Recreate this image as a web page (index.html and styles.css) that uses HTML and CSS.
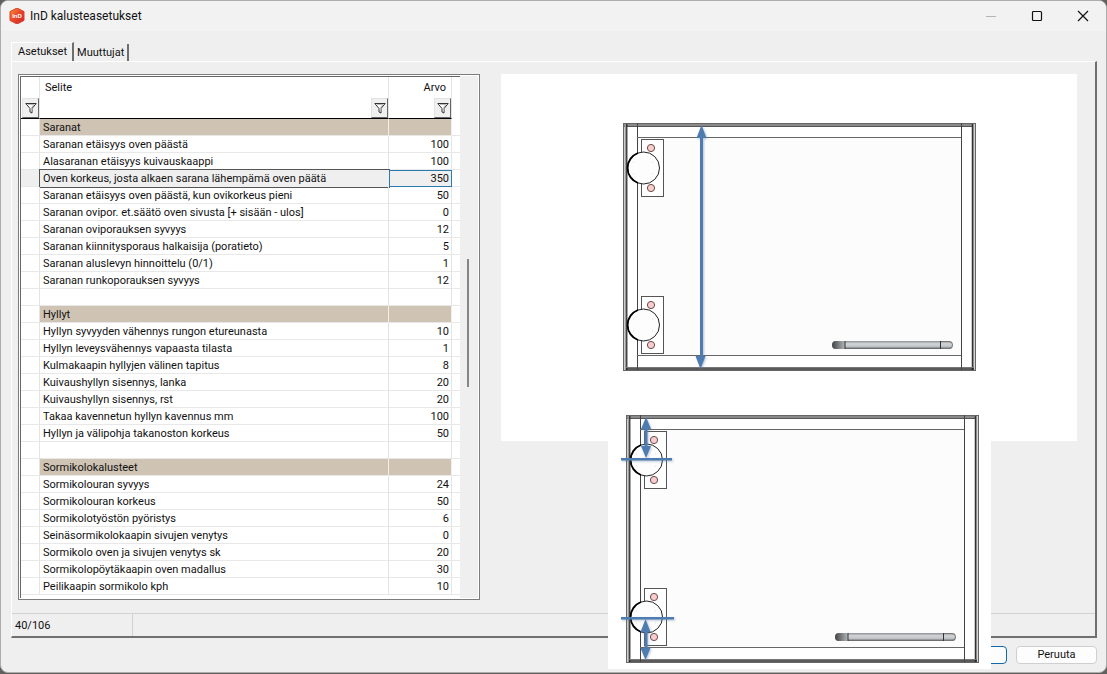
FILE: index.html
```
<!DOCTYPE html>
<html lang="fi">
<head>
<meta charset="utf-8">
<title>InD kalusteasetukset</title>
<link rel="stylesheet" href="styles.css">
</head>
<body>
<svg class="defs" width="0" height="0" aria-hidden="true">
  <defs>
    <linearGradient id="logo-fill" x1="0" y1="0" x2="1" y2="1"><stop offset="0" stop-color="#f59a2c"/><stop offset=".45" stop-color="#ea4b2a"/><stop offset="1" stop-color="#cf1f2b"/></linearGradient>
    <linearGradient id="bar-fill" x1="0" y1="0" x2="0" y2="1"><stop offset="0" stop-color="#8d9092"/><stop offset=".35" stop-color="#d3d6d8"/><stop offset=".7" stop-color="#bfc2c4"/><stop offset="1" stop-color="#55585a"/></linearGradient>
    <linearGradient id="bar-end" x1="0" y1="0" x2="1" y2="0"><stop offset="0" stop-color="#444"/><stop offset="1" stop-color="#b4b7b9"/></linearGradient>
    <filter id="soft" x="-200%" y="-20%" width="500%" height="140%"><feDropShadow dx="1" dy="1" stdDeviation="1" flood-color="#5f7ba5" flood-opacity=".45"/></filter>
    <filter id="soft-line" filterUnits="userSpaceOnUse" x="0" y="0" width="383" height="260"><feDropShadow dx="1" dy="1" stdDeviation="1" flood-color="#5f7ba5" flood-opacity=".45"/></filter>
    <symbol id="funnel" viewBox="0 0 12 12"><path d="M.8 1.500h10.400L7 6.500V11L5 10V6.500z" fill="#fff" stroke="#333"/><path d="M3 2.500h6L6.500 5.500V9.500" fill="none" stroke="#bbb"/></symbol>
    <g id="hinge">
      <rect x="19.500" y="17.500" width="22" height="57" fill="#fff" stroke="#555"/>
      <circle cx="21.500" cy="46" r="16" fill="#fdfdfd" stroke="#222"/>
      <path d="M16 31a16 16 0 0 0 0 30" fill="none" stroke="#000" stroke-width="1.800"/>
      <circle cx="29" cy="26" r="3.600" fill="#f8cdcd" stroke="#6d4a4a"/>
      <circle cx="29" cy="66" r="3.600" fill="#f8cdcd" stroke="#6d4a4a"/>
      <path d="M11 40h1m18 0h1m-20 12h1m18 0h1" stroke="#ddd"/>
    </g>
    <g id="door">
      <rect x="1.500" y="1.500" width="352" height="247" fill="#fff" stroke="#666"/>
      <rect x="15" y="15" width="324" height="218" fill="#fcfcfc"/>
      <rect x="2" y="2" width="349" height="2.500" fill="#8a8a8a"/>
      <path d="M2 4.500h350" stroke="#555"/>
      <path d="M3.500 2v246" stroke="#999" stroke-width="2"/>
      <path d="M4.800 2v246" stroke="#222" stroke-width="1.200"/>
      <path d="M351.500 2v246" stroke="#aaa" stroke-width="2"/>
      <path d="M350.500 2v246" stroke="#333" stroke-width="1.500"/>
      <path d="M4 245.500h348" stroke="#777"/>
      <path d="M4 247h348" stroke="#222" stroke-width="1.500"/>
      <path d="M15.500 1v247M339.500 1v247" stroke="#444"/>
      <path d="M15 15.500h324M15 233.500h324" stroke="#666"/>
      <use href="#hinge"/>
      <use href="#hinge" y="157"/>
      <rect x="210" y="219" width="121" height="8" rx="4" fill="url(#bar-fill)"/>
      <path d="M223 219h-9a4 4 0 0 0 0 8h9z" fill="url(#bar-end)"/>
      <path d="M319 219.500h8a3.500 3.500 0 0 1 0 7h-8" fill="none" stroke="#777"/>
      <path d="M223 219v8M318.500 219v8" stroke="#333"/>
    </g>
  </defs>
</svg>

<div class="window">
  <header class="titlebar">
    <svg class="logo" viewBox="0 0 16 16" aria-hidden="true"><path d="M8 0l7 3.600v8.800L8 16l-7-3.600V3.600z" fill="url(#logo-fill)" stroke="#d9402a" stroke-linejoin="round"/><text x="8" y="10" text-anchor="middle" class="logo-text">InD</text></svg>
    <h1 class="title">InD kalusteasetukset</h1>
    <button class="caption-button" aria-label="Pienennä" disabled><svg viewBox="0 0 12 12"><path d="M1 6.500h10" stroke="#b5b5b5"/></svg></button>
    <button class="caption-button" aria-label="Suurenna"><svg viewBox="0 0 12 12"><rect x="1.500" y="1.500" width="9" height="9" rx="1" fill="none" stroke="#111" stroke-width="1.200"/></svg></button>
    <button class="caption-button" aria-label="Sulje"><svg viewBox="0 0 12 12"><path d="M1 1l10 10M11 1L1 11" stroke="#111" stroke-width="1.200"/></svg></button>
  </header>

  <main class="content">
    <div class="tabs" role="tablist">
      <button class="tab tab-active" role="tab" aria-selected="true">Asetukset</button>
      <button class="tab" role="tab" aria-selected="false">Muuttujat</button>
    </div>
    <section class="panel">
      <div class="workspace">
        <div class="grid-frame">
          <div class="grid-body">
            <table class="grid">
              <colgroup><col class="col-mark"><col><col class="col-value"><col class="col-rest"></colgroup>
              <thead>
                <tr class="labels"><th></th><th>Selite</th><th class="value">Arvo</th><td></td></tr>
                <tr class="filters">
                  <td><button class="filter" aria-label="Suodata"><svg><use href="#funnel"/></svg></button></td>
                  <td><button class="filter" aria-label="Suodata selite"><svg><use href="#funnel"/></svg></button></td>
                  <td><button class="filter" aria-label="Suodata arvo"><svg><use href="#funnel"/></svg></button></td>
                  <td class="plain"></td>
                </tr>
              </thead>
              <tbody>
                <tr class="group"><td></td><td>Saranat</td><td></td><td></td></tr>
                <tr><td></td><td>Saranan etäisyys oven päästä</td><td>100</td><td></td></tr>
                <tr><td></td><td>Alasaranan etäisyys kuivauskaappi</td><td>100</td><td></td></tr>
                <tr class="selected"><td></td><td>Oven korkeus, josta alkaen sarana lähempämä oven päätä</td><td>350</td><td></td></tr>
                <tr><td></td><td>Saranan etäisyys oven päästä, kun ovikorkeus pieni</td><td>50</td><td></td></tr>
                <tr><td></td><td>Saranan ovipor. et.säätö oven sivusta [+ sisään - ulos]</td><td>0</td><td></td></tr>
                <tr><td></td><td>Saranan oviporauksen syvyys</td><td>12</td><td></td></tr>
                <tr><td></td><td>Saranan kiinnitysporaus halkaisija (poratieto)</td><td>5</td><td></td></tr>
                <tr><td></td><td>Saranan aluslevyn hinnoittelu (0/1)</td><td>1</td><td></td></tr>
                <tr><td></td><td>Saranan runkoporauksen syvyys</td><td>12</td><td></td></tr>
                <tr><td></td><td></td><td></td><td></td></tr>
                <tr class="group"><td></td><td>Hyllyt</td><td></td><td></td></tr>
                <tr><td></td><td>Hyllyn syvyyden vähennys rungon etureunasta</td><td>10</td><td></td></tr>
                <tr><td></td><td>Hyllyn leveysvähennys vapaasta tilasta</td><td>1</td><td></td></tr>
                <tr><td></td><td>Kulmakaapin hyllyjen välinen tapitus</td><td>8</td><td></td></tr>
                <tr><td></td><td>Kuivaushyllyn sisennys, lanka</td><td>20</td><td></td></tr>
                <tr><td></td><td>Kuivaushyllyn sisennys, rst</td><td>20</td><td></td></tr>
                <tr><td></td><td>Takaa kavennetun hyllyn kavennus mm</td><td>100</td><td></td></tr>
                <tr><td></td><td>Hyllyn ja välipohja takanoston korkeus</td><td>50</td><td></td></tr>
                <tr><td></td><td></td><td></td><td></td></tr>
                <tr class="group"><td></td><td>Sormikolokalusteet</td><td></td><td></td></tr>
                <tr><td></td><td>Sormikolouran syvyys</td><td>24</td><td></td></tr>
                <tr><td></td><td>Sormikolouran korkeus</td><td>50</td><td></td></tr>
                <tr><td></td><td>Sormikolotyöstön pyöristys</td><td>6</td><td></td></tr>
                <tr><td></td><td>Seinäsormikolokaapin sivujen venytys</td><td>0</td><td></td></tr>
                <tr><td></td><td>Sormikolo oven ja sivujen venytys sk</td><td>20</td><td></td></tr>
                <tr><td></td><td>Sormikolopöytäkaapin oven madallus</td><td>30</td><td></td></tr>
                <tr><td></td><td>Peilikaapin sormikolo kph</td><td>10</td><td></td></tr>
              </tbody>
            </table>
          </div>
          <div class="scrollbar"><div class="thumb"></div></div>
        </div>

        <div class="preview">
          <svg class="drawing" width="476" height="367" viewBox="0 0 476 367" role="img" aria-label="Oven korkeus">
            <use href="#door" x="121" y="48"/>
            <g fill="#4f7cb0" filter="url(#soft)"><path d="M199 60h3v225h-3z"/><path d="M200.500 51l5 13h-10zM199.500 295l5-13h-10z"/></g>
          </svg>
          <svg class="drawing-detail" width="383" height="260" viewBox="0 0 383 260" role="img" aria-label="Saranan etäisyys oven päästä">
            <rect width="383" height="260" fill="#fff"/>
            <use href="#door" x="17" y="5"/>
            <g fill="#4f7cb0" filter="url(#soft-line)">
              <path d="M13 49h51v2.500H13zM13 208h53v2.500H13z"/>
              <path d="M36.500 17h3v24h-3zM36.500 220h3v22h-3z"/>
              <path d="M38 8l5 12H33zM38 49l5-12H33zM37.500 210l5 13h-10zM37.500 251l5-12h-10z"/>
            </g>
          </svg>
        </div>
      </div>
      <footer class="status"><span class="status-count">40/106</span></footer>
    </section>
    <div class="actions">
      <button class="action action-default" aria-label="OK"></button>
      <button class="action">Peruuta</button>
    </div>
  </main>
</div>
</body>
</html>
```
FILE: styles.css
```
* { box-sizing: border-box; }
body { margin: 0; background: #625f5f; font: 11px/16px Roboto, "Liberation Sans", sans-serif; color: #111; }
button { font: inherit; color: inherit; margin: 0; padding: 0; }
.defs { position: absolute; }

.window { min-height: calc(100vh - 1px); display: flex; flex-direction: column; background: #efefef; border: 1px solid #adadad; border-radius: 8px; overflow: hidden; }

.titlebar { height: 30px; display: flex; align-items: center; background: #f2f2f2; padding-left: 8px; }
.logo { width: 16px; height: 16px; }
.logo-text { font: bold 6px "Liberation Sans", sans-serif; fill: #fff; }
.title { flex: 1; margin: 0 0 0 5px; font: 12px/16px Roboto, sans-serif; color: #111; }
.caption-button { width: 46px; height: 30px; border: 0; background: none; display: grid; place-items: center; }
.caption-button svg { width: 12px; height: 12px; }

.content { flex: 1; display: flex; flex-direction: column; padding: 11px 9px 8px 10px; }
.tabs { display: flex; align-items: flex-end; height: 19px; }
.tab { height: 17px; padding: 0 3px; background: none; border: 0; border-right: 2px solid #6e6e6e; }
.tab-active { height: 19px; padding: 0 5px 0 6px; border-top: 1px solid #fff; border-left: 1px solid #fff; }

.panel { flex: 1; display: flex; flex-direction: column; border: 1px solid #fff; border-right: 2px solid #707070; border-bottom: 2px solid #707070; }
.workspace { flex: 1; display: flex; padding: 12px 18px 13px 6px; gap: 21px; }

.grid-frame { width: 462px; display: flex; background: #fff; border: 1px solid #7b7b80; padding: 1px; }
.grid-body { flex: 1; border-top: 1px solid #666; border-left: 1px solid #666; }
.grid { width: 100%; table-layout: fixed; border-collapse: separate; border-spacing: 0; }
.col-mark { width: 19px; }
.col-value { width: 63px; }
.col-rest { width: 8px; }
.grid th, .grid td { height: 17px; padding: 0 3px; border-right: 1px solid #e4e4e4; border-bottom: 1px solid #e8e8e8; font-weight: normal; text-align: left; white-space: nowrap; }
.grid tr > :last-child { border-right: 0; padding: 0; }
.grid tbody td { padding-top: 2px; line-height: 14px; }
.grid tbody td:nth-child(3) { text-align: right; padding-right: 2px; }
.grid .labels > * { height: 21px; border-bottom: 0; padding: 0 5px; }
.grid .labels .value { text-align: right; }
.grid .filters td { height: 21px; padding: 0; border-bottom: 1px solid #000; }
.grid .filters .plain { border-bottom: 0; }
.filter { display: grid; place-items: center; width: 17px; height: 20px; margin-left: auto; background: #f0f0f0; border: 1px solid #e2e2e2; border-right-color: #666; border-bottom-color: #666; }
.filter svg { width: 12px; height: 12px; }
.grid .group td:nth-child(2), .grid .group td:nth-child(3) { background: #cfc3b4; border-right-color: #f2eeea; }
.grid .selected td:first-child, .grid .selected td:nth-child(2), .grid .selected td:nth-child(3) { background: #efefef; }
.grid .selected td:nth-child(2) { box-shadow: 0 0 0 1px #555; border-color: #efefef; }
.grid .selected td:nth-child(3) { box-shadow: inset 1px 1px #2a7aaf; border-color: #2a7aaf; }
.scrollbar { width: 18px; background: #efefef; padding: 183px 9px 0 7px; }
.thumb { width: 2px; height: 128px; background: #868686; }

.preview { flex: 1; align-self: flex-start; position: relative; background: #fff; }
.drawing { display: block; }
.drawing-detail { position: absolute; left: 107px; top: 335px; z-index: 1; }

.status { height: 23px; display: flex; border-top: 1px solid #d2d2d2; }
.status-count { width: 121px; padding: 4px 3px; border-right: 1px solid #d2d2d2; }

.actions { display: flex; justify-content: flex-end; gap: 9px; padding-top: 8px; }
.action { width: 81px; height: 18px; background: #fdfdfd; border: 1px solid #cfcfcf; border-radius: 4px; }
.action-default { border-color: #1069a8; }
```
